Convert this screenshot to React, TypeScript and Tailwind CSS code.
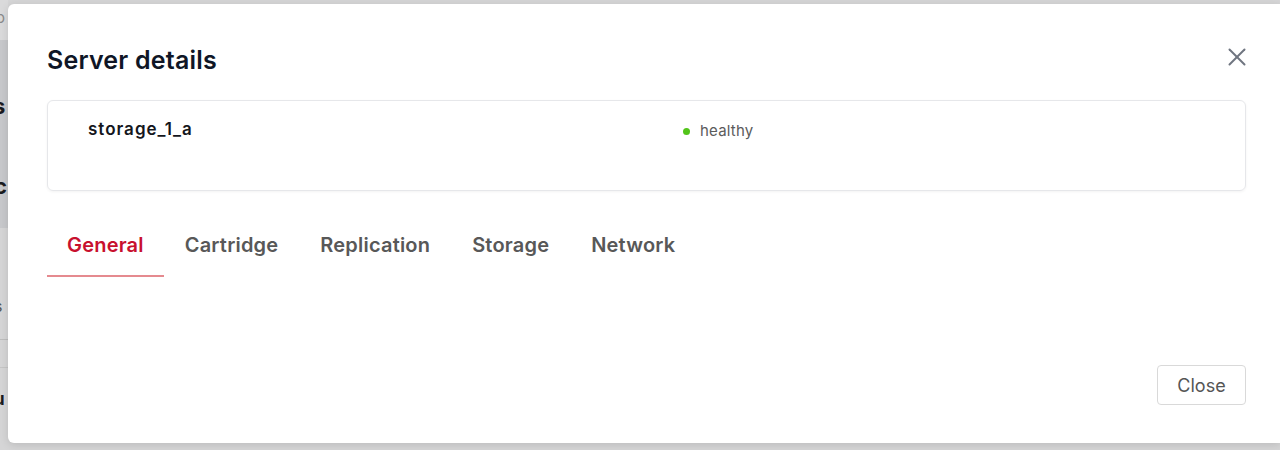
import { X } from 'lucide-react';

const tabs = ['General', 'Cartridge', 'Replication', 'Storage', 'Network'];

export default function App() {
  return (
    <div
      className="relative h-[450px] w-[1280px] overflow-hidden bg-[#d5d5d6]"
      style={{ fontFamily: 'Inter, "Liberation Sans", sans-serif' }}
    >
      {/* page behind the overlay, only a sliver is visible */}
      <div className="absolute left-0 top-0 flex h-full w-[8px] flex-col overflow-hidden">
        <div className="h-[40px] shrink-0 bg-[#dadadb] text-[15px] leading-[36px] text-[#8a8a8a]">
          <span className="-ml-[4px]">o</span>
        </div>
        <div className="flex h-[188px] shrink-0 flex-col bg-[#c7c8cb] text-[22px] font-bold text-[#1b1b1f]">
          <span className="-ml-[7px] mt-[55px] leading-none">s</span>
          <span className="-ml-[6px] mt-[58px] leading-none">c</span>
        </div>
        <div className="h-[112px] shrink-0 border-b border-[#bdbdbd] text-[16px] leading-none text-[#555]">
          <span className="-ml-[6px] mt-[70px] block">s</span>
        </div>
        <div className="h-[28px] shrink-0 border-b border-[#c5c5c5]" />
        <div className="text-[17px] font-bold leading-none text-[#1b1b1f]">
          <span className="-ml-[6px] mt-[23px] block">u</span>
        </div>
      </div>

      <div className="absolute bottom-[7px] left-[8px] right-0 top-[4px] flex flex-col rounded-l-[6px] bg-white pl-[39px] pr-[34px] shadow-[0_2px_8px_rgba(0,0,0,0.12)]">
        <div className="flex items-start justify-between pt-[41px]">
          <h2 className="text-[25px] font-semibold leading-[30px] tracking-[0.2px] text-[#0f1626]">Server details</h2>
          <button className="-mt-[3px] mr-[-6px] text-[#6f7580]">
            <X size={30} strokeWidth={1.6} />
          </button>
        </div>

        <div className="mt-[25px] flex h-[91px] rounded-[6px] border border-[#e6e7ea] shadow-[0_1px_3px_rgba(0,0,0,0.05)]">
          <div className="w-[635px] pl-[40px] pt-[16px] text-[17px] font-semibold tracking-[1px] text-[#14161c]">storage_1_a</div>
          <div className="flex items-start gap-[10px] pt-[21px] text-[15px] tracking-[0.2px] text-[#5b5b5b]">
            <span className="mt-[6px] h-[7px] w-[7px] rounded-full bg-[#52c41a]" />
            <span className="leading-[18px]">healthy</span>
          </div>
        </div>

        <div className="mt-[24px] flex">
          {tabs.map((t, i) => (
            <div
              key={t}
              className={
                i === 0
                  ? 'border-b-2 border-[#e58a8f] px-[20px] pb-[15px] pt-[15px] text-[20px] font-semibold tracking-[0.2px] text-[#c8102e]'
                  : 'border-b-2 border-transparent px-[21px] pb-[15px] pt-[15px] text-[20px] font-semibold tracking-[0.2px] text-[#585858]'
              }
            >
              {t}
            </div>
          ))}
        </div>

        <div className="mt-auto flex justify-end pb-[38px]">
          <button className="h-[40px] w-[89px] rounded-[4px] border border-[#d9d9d9] text-[18px] text-[#555]">
            Close
          </button>
        </div>
      </div>
    </div>
  );
}
